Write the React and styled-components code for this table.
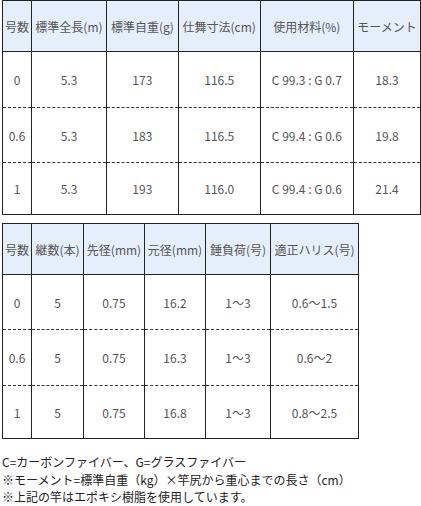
import React from "react";
import styled, { createGlobalStyle } from "styled-components";

const GlobalStyle = createGlobalStyle`
  body {
    margin: 0;
    background: #fff;
    font-family: "Noto Sans CJK JP", "Liberation Sans", sans-serif;
    color: #333;
  }
`;

const specRows = [
  ["0", "5.3", "173", "116.5", "C 99.3 : G 0.7", "18.3"],
  ["0.6", "5.3", "183", "116.5", "C 99.4 : G 0.6", "19.8"],
  ["1", "5.3", "193", "116.0", "C 99.4 : G 0.6", "21.4"],
];

const detailRows = [
  ["0", "5", "0.75", "16.2", "1〜3", "0.6〜1.5"],
  ["0.6", "5", "0.75", "16.3", "1〜3", "0.6〜2"],
  ["1", "5", "0.75", "16.8", "1〜3", "0.8〜2.5"],
];

const SpecTable = ({ headers, rows, widths, rowHeights }) => {
  return (
    <Table>
      <colgroup>
        {widths.map((w, i) => (
          <col key={i} style={{ width: w }} />
        ))}
      </colgroup>
      <thead>
        <tr>
          {headers.map((h) => (
            <HeadCell key={h}>{h}</HeadCell>
          ))}
        </tr>
      </thead>
      <tbody>
        {rows.map((row, r) => (
          <BodyRow key={r} $h={rowHeights[r]}>
            {row.map((cell, c) => (
              <Cell key={c}>{cell}</Cell>
            ))}
          </BodyRow>
        ))}
      </tbody>
    </Table>
  );
};

const App = () => {
  return (
    <Wrapper>
      <GlobalStyle />
      <SpecTable
        headers={["号数", "標準全長(m)", "標準自重(g)", "仕舞寸法(cm)", "使用材料(%)", "モーメント"]}
        rows={specRows}
        widths={[29, 75, 72, 82, 94, 67]}
        rowHeights={[56, 55, 52]}
      />
      <SpecTable
        headers={["号数", "継数(本)", "先径(mm)", "元径(mm)", "錘負荷(号)", "適正ハリス(号)"]}
        rows={detailRows}
        widths={[28, 52, 61, 61, 65, 88]}
        rowHeights={[55, 56, 53]}
      />
      <Notes>
        <p>C=カーボンファイバー、G=グラスファイバー</p>
        <p>※モーメント=標準自重（kg）×竿尻から重心までの長さ（cm）</p>
        <p>※上記の竿はエポキシ樹脂を使用しています。</p>
      </Notes>
    </Wrapper>
  );
};

const Wrapper = styled.div`
  padding: 0 0 0 2px;
  display: flex;
  flex-direction: column;
  align-items: flex-start;
  gap: 8px;
`;

const Table = styled.table`
  border-collapse: collapse;
  table-layout: fixed;
  border: 1px solid #222;
  font-size: 12px;
  color: #555;

  tbody tr + tr td {
    border-top: 1px dashed #333;
  }
`;

const HeadCell = styled.th`
  height: 50px;
  padding: 0 2px;
  background: #e5eefb;
  font-weight: normal;
  text-align: center;
  white-space: nowrap;
  border-left: 1px solid #222;
  border-right: 1px solid #222;
  border-bottom: 1px solid #222;
`;

const BodyRow = styled.tr`
  height: ${(p) => p.$h}px;
`;

const Cell = styled.td`
  padding: 0 2px;
  text-align: center;
  white-space: nowrap;
  border-left: 1px solid #222;
  border-right: 1px solid #222;
`;

const Notes = styled.div`
  margin-top: 6px;
  font-size: 12px;
  line-height: 17.5px;
  color: #222;
  p {
    margin: 0;
  }
`;

export default App;
